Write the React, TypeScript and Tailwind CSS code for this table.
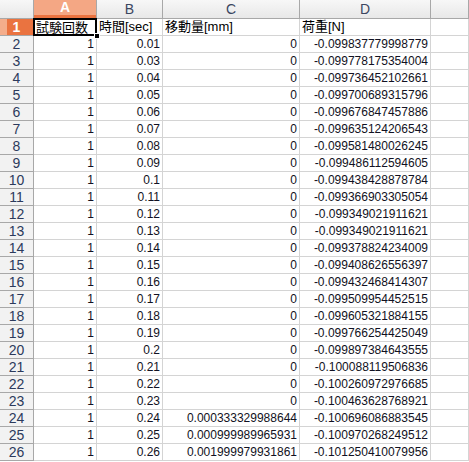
import React from 'react';

const rows: [string, string, string, string][] = [
    ['1', '0.01', '0', '-0.099837779998779'],
    ['1', '0.03', '0', '-0.099778175354004'],
    ['1', '0.04', '0', '-0.099736452102661'],
    ['1', '0.05', '0', '-0.099700689315796'],
    ['1', '0.06', '0', '-0.099676847457886'],
    ['1', '0.07', '0', '-0.099635124206543'],
    ['1', '0.08', '0', '-0.099581480026245'],
    ['1', '0.09', '0', '-0.099486112594605'],
    ['1', '0.1', '0', '-0.099438428878784'],
    ['1', '0.11', '0', '-0.099366903305054'],
    ['1', '0.12', '0', '-0.099349021911621'],
    ['1', '0.13', '0', '-0.099349021911621'],
    ['1', '0.14', '0', '-0.099378824234009'],
    ['1', '0.15', '0', '-0.099408626556397'],
    ['1', '0.16', '0', '-0.099432468414307'],
    ['1', '0.17', '0', '-0.099509954452515'],
    ['1', '0.18', '0', '-0.099605321884155'],
    ['1', '0.19', '0', '-0.099766254425049'],
    ['1', '0.2', '0', '-0.099897384643555'],
    ['1', '0.21', '0', '-0.100088119506836'],
    ['1', '0.22', '0', '-0.100260972976685'],
    ['1', '0.23', '0', '-0.100463628768921'],
    ['1', '0.24', '0.000333329988644', '-0.100696086883545'],
    ['1', '0.25', '0.000999989965931', '-0.100970268249512'],
    ['1', '0.26', '0.001999979931861', '-0.101250410079956'],
];

const cols = 'grid grid-cols-[34px_63px_66px_137px_131px_1fr]';
const cell = 'h-[17px] border-r border-b border-[#d4d4d4] px-[2px] leading-[16px] overflow-hidden whitespace-nowrap';

export default function App() {
    return (
        <div
            className="w-[469px] h-[462px] overflow-hidden bg-white text-[12px] text-[#111122]"
            style={{ fontFamily: '"Liberation Sans", "Noto Sans CJK JP", sans-serif' }}
        >
            {/* column headers */}
            <div className={cols}>
                <div className="h-[19px] bg-gradient-to-b from-[#f7f7f7] to-[#e8e8e8] border-r border-b border-[#a8a8a8]" />
                <div className="h-[19px] flex flex-col border-r border-b border-[#a8a8a8]">
                    <div className="flex-1 bg-[#f4a784] text-white text-[14px] font-bold leading-[15px] text-center">A</div>
                    <div className="h-[3px] bg-[#ea7340]" />
                </div>
                {['B', 'C', 'D', ''].map((c, i) => (
                    <div
                        key={i}
                        className="h-[19px] bg-gradient-to-b from-[#f7f7f7] to-[#e8e8e8] border-r border-b border-[#a8a8a8] text-center text-[14px] leading-[18px] text-[#3b4660]"
                    >
                        {c}
                    </div>
                ))}
            </div>

            {/* row 1 */}
            <div className={cols}>
                <div className="h-[17px] flex border-r border-b border-[#a8a8a8]">
                    <div className="w-[7px] bg-[#f4ad8b]" />
                    <div className="flex-1 bg-[#ea7340] text-white font-bold text-[14px] leading-[16px] text-center pr-[7px]">1</div>
                </div>
                <div className="relative h-[17px] border-b border-[#d4d4d4]">
                    <div className="absolute -left-px -top-px right-0 bottom-[-1px] border-2 border-black px-[1px] leading-[15px] overflow-hidden whitespace-nowrap text-[13px] text-black">
                        試験回数
                    </div>
                    <div className="absolute -right-[3px] -bottom-[4px] w-[6px] h-[6px] bg-black border border-white z-10" />
                </div>
                <div className={`${cell} text-[13px] text-black`}>時間[sec]</div>
                <div className={`${cell} text-[13px] text-black`}>移動量[mm]</div>
                <div className={`${cell} text-[13px] text-black`}>荷重[N]</div>
                <div className={cell} />
            </div>

            {rows.map((r, i) => (
                <div key={i} className={cols}>
                    <div className="h-[17px] bg-[#f2f2f2] border-r border-b border-[#a8a8a8] text-center text-[14px] leading-[16px] text-[#2c3a5c]">
                        {i + 2}
                    </div>
                    {r.map((v, j) => (
                        <div key={j} className={`${cell} text-right`}>
                            {v}
                        </div>
                    ))}
                    <div className={cell} />
                </div>
            ))}
        </div>
    );
}
